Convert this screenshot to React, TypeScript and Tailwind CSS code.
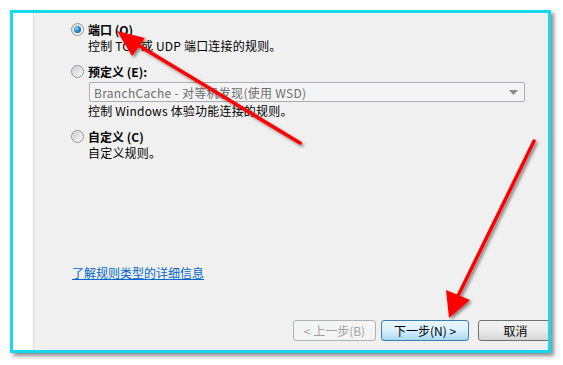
import React from "react";

const font = { fontFamily: '"Noto Sans CJK SC", "Noto Sans", sans-serif' };

function Radio({ checked }: { checked?: boolean }) {
  return (
    <div className="w-[13px] h-[13px] rounded-full border border-[#8f9396] bg-gradient-to-br from-[#d4d6d8] to-[#ffffff] flex items-center justify-center shrink-0">
      {checked ? (
        <div className="w-[7px] h-[7px] rounded-full bg-[radial-gradient(circle_at_35%_35%,#8ad3ff,#1573b8_60%,#0b4f86)]" />
      ) : (
        <div className="w-[9px] h-[9px] rounded-full bg-gradient-to-br from-[#cfd1d3] to-[#f4f4f4]" />
      )}
    </div>
  );
}

function Option({ checked, label }: { checked?: boolean; label: string }) {
  return (
    <div className="flex flex-row items-center h-[15px] pl-[37px]">
      <Radio checked={checked} />
      <span className="ml-[4px] text-[12px] font-bold text-black leading-[15px] whitespace-pre">{label}</span>
    </div>
  );
}

function Desc({ text }: { text: string }) {
  return <p className="pl-[54px] h-[15px] text-[12px] leading-[15px] text-black whitespace-pre tracking-[0.2px]">{text}</p>;
}

export default function App() {
  return (
    <div className="w-[563px] h-[365px] bg-white relative overflow-hidden" style={font}>
      <div className="absolute left-[10px] top-[10px] w-[541px] h-[343px] border-[3px] border-[#16d9ef] shadow-[3px_3px_4px_rgba(0,0,0,0.45)] flex flex-row bg-white">
        <div className="w-[21px] border-r border-[#dcdcdc] bg-white" />
        <div className="flex-1 bg-[#f0f0f0] flex flex-col pt-[9px] pb-[9px] overflow-hidden">
          <Option checked label="端口 (O)" />
          <div className="mt-[1px]">
            <Desc text="控制 TCP 或 UDP 端口连接的规则。" />
          </div>

          <div className="mt-[11px]">
            <Option label="预定义 (E):" />
          </div>
          <div className="mt-[3px] ml-[55px] w-[436px] h-[20px] rounded-[2px] border border-[#abadb3] bg-[#f4f4f4] flex flex-row items-center justify-between pl-[4px] pr-[6px]">
            <span className="text-[12px] text-[#6d6d6d] leading-[15px] whitespace-pre tracking-[0.3px]">BranchCache - 对等机发现(使用 WSD)</span>
            <svg width="9" height="5" viewBox="0 0 9 5">
              <polygon points="0,0 9,0 4.5,5" fill="#8a8a8a" />
            </svg>
          </div>
          <div className="mt-[1px]">
            <Desc text="控制 Windows 体验功能连接的规则。" />
          </div>

          <div className="mt-[11px]">
            <Option label="自定义 (C)" />
          </div>
          <div className="mt-[1px]">
            <Desc text="自定义规则。" />
          </div>

          <div className="mt-[99px] pl-[38px]">
            <a className="text-[12px] leading-[14px] text-[#0066cc] underline">了解规则类型的详细信息</a>
          </div>

          <div className="flex-1" />

          <div className="flex flex-row pl-[259px] h-[21px] items-stretch">
            <button className="w-[83px] shrink-0 rounded-[3px] border border-[#adb2b5] bg-[#f4f4f4] text-[12px] text-[#a0a0a0]">
              &lt; 上一步(B)
            </button>
            <button className="ml-[5px] w-[88px] shrink-0 rounded-[3px] border border-[#3c7fb1] bg-gradient-to-b from-[#eaf6fd] via-[#d9f0fc] to-[#a7d9f5] text-[12px] text-black">
              下一步(N) &gt;
            </button>
            <button className="ml-[9px] w-[75px] shrink-0 rounded-[3px] border border-[#707070] bg-gradient-to-b from-[#f2f2f2] via-[#ebebeb] to-[#d5d5d5] text-[12px] text-black">
              取消
            </button>
          </div>
        </div>
      </div>

      <svg className="absolute left-0 top-0" width="563" height="365" viewBox="0 0 563 365">
        <defs>
          <filter id="sh" x="-20%" y="-20%" width="140%" height="140%">
            <feDropShadow dx="2" dy="2" stdDeviation="1.5" floodColor="#000" floodOpacity="0.45" />
          </filter>
        </defs>
        <g filter="url(#sh)" fill="#ff0000" stroke="#ff0000">
          <line x1="300" y1="143" x2="128" y2="39" strokeWidth="3.5" strokeLinecap="round" />
          <polygon points="117,31 145,38 132,56" stroke="none" />
          <line x1="534" y1="141" x2="456" y2="300" strokeWidth="3.5" strokeLinecap="round" />
          <polygon points="449,318 446,290 470,300" stroke="none" />
        </g>
      </svg>
    </div>
  );
}
